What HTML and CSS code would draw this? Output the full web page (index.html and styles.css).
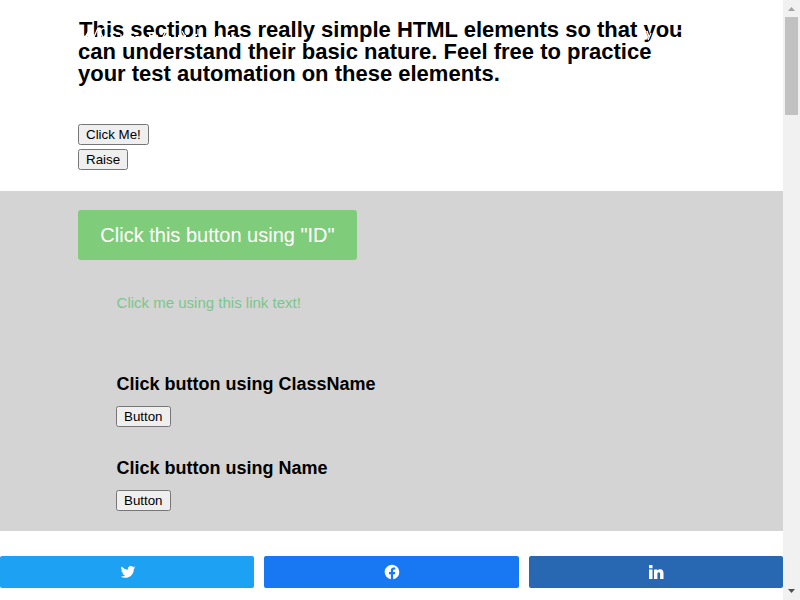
FILE: index.html
```html
<!DOCTYPE html>
<html lang="en">
<head>
<meta charset="utf-8">
<title>Simple HTML Elements</title>
<link rel="stylesheet" href="styles.css">
</head>
<body>
<div class="window">
  <main class="page">
    <!-- transparent site header: white logo and controls over the content -->
    <svg class="overlay" width="783" height="48" viewBox="0 0 783 48" aria-hidden="true">
      <path d="M80 33l5 4 5-8 4 8 4-9 5 9M84 40l5-7M101 30q4-4 5 1t-5 8M110 33l5 5M121 34v6"/>
      <path class="band" d="M130 37h16M149 36h9M163 37h8M178 36h8M193 35h9M205 38h6M216 37h6M226 36h8"/>
      <path d="M152 32l3 6M166 31l-3 6M182 31l4 7M198 29v6M219 31l4 6"/>
      <path d="M642 27l4 5M647 31l2 6M651 33l-3 7M678 31h5M677 36v3"/>
    </svg>
    <section class="intro">
      <h1>This section has really simple HTML elements so that you can understand their basic nature. Feel free to practice your test automation on these elements.</h1>
      <div class="stack">
        <button class="native">Click Me!</button>
        <button class="native">Raise</button>
      </div>
    </section>
    <section class="demo">
      <a class="cta">Click this button using "ID"</a>
      <div class="items">
        <a class="link">Click me using this link text!</a>
        <h2>Click button using ClassName</h2>
        <button class="native">Button</button>
        <h2 class="second">Click button using Name</h2>
        <button class="native">Button</button>
      </div>
    </section>
    <nav class="share">
      <a class="twitter"><svg width="16" height="16" viewBox="0 0 24 24"><path d="M23 5.100a9 9 0 0 1-2.600.7 4.500 4.500 0 0 0 2-2.500 9 9 0 0 1-2.900 1.100A4.500 4.500 0 0 0 11.800 8.500 12.800 12.800 0 0 1 2.500 3.800a4.500 4.500 0 0 0 1.400 6 4.500 4.500 0 0 1-2-.6 4.500 4.500 0 0 0 3.600 4.500 4.500 4.500 0 0 1-2 .1 4.500 4.500 0 0 0 4.200 3.100A9 9 0 0 1 1 18.800a12.800 12.800 0 0 0 6.900 2C16.200 20.800 21 14 20.700 7.500A9 9 0 0 0 23 5.100z"/></svg></a>
      <a class="facebook"><svg width="16" height="16" viewBox="0 0 24 24"><path d="M23 12A11 11 0 1 0 10.300 22.900v-7.700H7.500V12h2.800V9.600c0-2.800 1.600-4.300 4.200-4.300 1.200 0 2.400.2 2.400.2v2.700h-1.400c-1.400 0-1.800.8-1.800 1.700V12h3.100l-.5 3.200h-2.600v7.700A11 11 0 0 0 23 12z"/></svg></a>
      <a class="linkedin"><svg width="16" height="16" viewBox="0 0 16 16"><path d="M1 5.500h3.500V15H1zM1 1h3.500v3.200H1zM6 5.500h3.300v1.200C9.800 5.900 10.800 5.300 12 5.300c2.800 0 3.500 1.800 3.500 4.300V15h-3.400v-4.700c0-1.100-.2-2-1.300-2s-1.400.9-1.400 2V15H6z"/></svg></a>
    </nav>
  </main>
  <aside class="scrollbar"><i class="up"></i><i class="thumb"></i><i class="down"></i></aside>
</div>
</body>
</html>
```
FILE: styles.css
```css
* { box-sizing: border-box; }
body { margin: 0; font-family: "Liberation Sans", Arial, sans-serif; background: #fff; color: #000; }
.window { display: flex; width: 800px; height: 600px; overflow: hidden; }
.page { position: relative; width: 783px; }
.overlay { position: absolute; top: 0; left: 0; fill: none; stroke: #fff; stroke-width: 1.300; pointer-events: none; }
.overlay .band { stroke-width: 2; stroke-dasharray: 4 1.500; }
.intro { height: 191px; padding: 19px 78px 0; }
h1 { margin: 0 0 39px; font-size: 22px; line-height: 22px; text-indent: 1px; }
.stack { display: flex; flex-direction: column; align-items: flex-start; gap: 4px; }
.native { display: block; height: 21px; padding: 1px 7px; border: 1px solid #767676; border-radius: 2.500px; background: #efefef; color: #000; font: 13.333px/15px "Liberation Sans", Arial, sans-serif; }
.demo { height: 340px; padding: 19px 78px 0; background: #d4d4d4; }
.cta { display: block; width: 279px; height: 50px; border-radius: 3px; background: #7fcc7b; color: #fff; font-size: 20px; line-height: 50px; text-align: center; }
.items { padding: 34px 0 0 38px; }
.link { display: block; height: 18px; color: #7bc68d; font-size: 15px; line-height: 18px; text-indent: 0.600px; }
h2 { margin: 63px 0 13px; font-size: 18px; line-height: 18px; text-indent: 0.500px; }
h2.second { margin-top: 32px; }
.share { display: grid; grid-template-columns: repeat(3, 1fr); gap: 10px; padding-top: 25px; }
.share a { display: flex; align-items: center; justify-content: center; height: 32px; border-radius: 2px; }
.share svg { margin-left: 1px; fill: #fff; }
.twitter { background: #1da1f2; }
.facebook { background: #1877f2; }
.linkedin { background: #2867b2; }
.scrollbar { display: flex; flex-direction: column; align-items: center; width: 17px; background: #f1f1f1; }
.up, .down { width: 7px; height: 4px; background: #a3a3a3; clip-path: polygon(50% 0, 100% 100%, 0 100%); margin: 7px 0 6px; }
.thumb { width: 13px; height: 98px; background: #c1c1c1; }
.down { margin: auto 0 7px; background: #505050; clip-path: polygon(0 0, 100% 0, 50% 100%); }
```
